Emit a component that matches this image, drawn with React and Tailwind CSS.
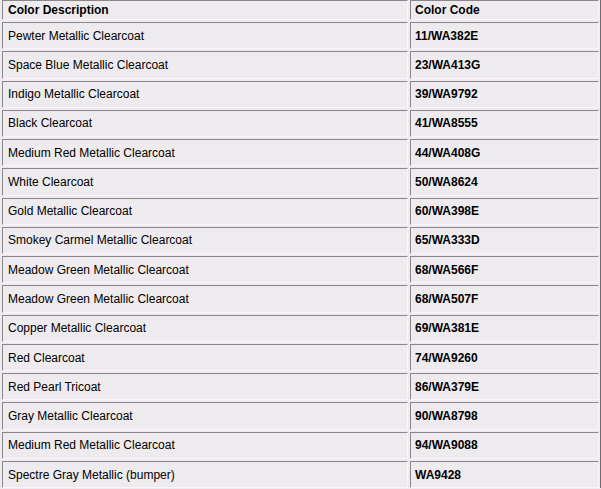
const rows = [
  ["Pewter Metallic Clearcoat", "11/WA382E"],
  ["Space Blue Metallic Clearcoat", "23/WA413G"],
  ["Indigo Metallic Clearcoat", "39/WA9792"],
  ["Black Clearcoat", "41/WA8555"],
  ["Medium Red Metallic Clearcoat", "44/WA408G"],
  ["White Clearcoat", "50/WA8624"],
  ["Gold Metallic Clearcoat", "60/WA398E"],
  ["Smokey Carmel Metallic Clearcoat", "65/WA333D"],
  ["Meadow Green Metallic Clearcoat", "68/WA566F"],
  ["Meadow Green Metallic Clearcoat", "68/WA507F"],
  ["Copper Metallic Clearcoat", "69/WA381E"],
  ["Red Clearcoat", "74/WA9260"],
  ["Red Pearl Tricoat", "86/WA379E"],
  ["Gray Metallic Clearcoat", "90/WA8798"],
  ["Medium Red Metallic Clearcoat", "94/WA9088"],
  ["Spectre Gray Metallic (bumper)", "WA9428"],
];

// inset cell border, like an old border=1 table
const cell =
  "flex items-center border border-t-[#8a878a] border-l-[#8a878a] border-b-[#f8f6f8] border-r-[#f8f6f8]";

export default function App() {
  return (
    <div className="w-[601px] h-[489px] overflow-hidden bg-[#eeebee] font-['Liberation_Sans',Arial,sans-serif] text-[12px] text-black">
      <div className="grid grid-cols-[406px_189px] gap-[2px] pl-[2px] pr-[1px] border-r border-r-[#6f6c6f]">
        <div className={`${cell} h-[20px] px-[5px] font-bold`}>Color Description</div>
        <div className={`${cell} h-[20px] px-[4px] font-bold`}>Color Code</div>
        {rows.map(([desc, code], i) => (
          <div key={i} className="contents">
            <div className={`${cell} h-[27.27px] px-[5px]`}>{desc}</div>
            <div className={`${cell} h-[27.27px] px-[4px] font-bold`}>{code}</div>
          </div>
        ))}
      </div>
    </div>
  );
}
